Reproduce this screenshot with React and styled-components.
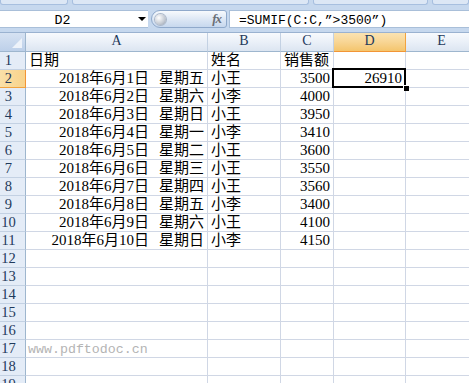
import React from 'react';
import styled, { createGlobalStyle, css } from 'styled-components';

const GlobalStyle = createGlobalStyle`
  html, body {
    margin: 0;
    padding: 0;
    background: #ffffff;
    overflow: hidden;
  }
`;

const columns = ['A', 'B', 'C', 'D', 'E'];

const records = [
  { date: '2018年6月1日', week: '星期五', name: '小王', sales: 3500 },
  { date: '2018年6月2日', week: '星期六', name: '小李', sales: 4000 },
  { date: '2018年6月3日', week: '星期日', name: '小王', sales: 3950 },
  { date: '2018年6月4日', week: '星期一', name: '小李', sales: 3410 },
  { date: '2018年6月5日', week: '星期二', name: '小王', sales: 3600 },
  { date: '2018年6月6日', week: '星期三', name: '小王', sales: 3550 },
  { date: '2018年6月7日', week: '星期四', name: '小王', sales: 3560 },
  { date: '2018年6月8日', week: '星期五', name: '小李', sales: 3400 },
  { date: '2018年6月9日', week: '星期六', name: '小王', sales: 4100 },
  { date: '2018年6月10日', week: '星期日', name: '小李', sales: 4150 },
];

const TOTAL_ROWS = 19;

const Window = styled.div`
  width: 469px;
  height: 383px;
  overflow: hidden;
  display: flex;
  flex-direction: column;
  background: #ffffff;
`;

// Bottom edge of the ribbon.
const RibbonEdge = styled.div`
  height: 9px;
  flex: none;
  display: flex;
  gap: 4px;
  background: #c6d8ee;
`;

const RibbonTab = styled.div`
  height: 4px;
  width: ${p => p.$w}px;
  flex: ${p => (p.$w ? 'none' : '1')};
  background: #dce7f5;
  border: 1px solid #a7bfdf;
  border-top: none;
  border-radius: 0 0 3px 3px;
`;

const FormulaBar = styled.div`
  height: 20px;
  flex: none;
  display: flex;
  align-items: stretch;
  background: #c6d8ee;
  padding: 1px 0;
  box-sizing: border-box;
`;

const NameBox = styled.div`
  width: 148px;
  flex: none;
  display: flex;
  background: #ffffff;
  border-top: 1px solid #a9bfd9;
  border-bottom: 1px solid #a9bfd9;
  box-sizing: border-box;
  font-family: "Liberation Mono", monospace;
  font-size: 13.3px;
  color: #000;
`;

const NameText = styled.div`
  width: 125px;
  display: flex;
  align-items: center;
  justify-content: center;
  padding-top: 2px;
`;

const DropArrow = styled.div`
  flex: 1;
  display: flex;
  align-items: center;
  justify-content: flex-end;
  padding-right: 2px;

  &::before {
    content: '';
    border-left: 4px solid transparent;
    border-right: 4px solid transparent;
    border-top: 4px solid #000;
  }
`;

const FxButton = styled.div`
  width: 76px;
  margin-left: 3px;
  flex: none;
  display: flex;
  align-items: center;
  justify-content: space-between;
  padding: 0 5px 0 3px;
  box-sizing: border-box;
  border: 1px solid #8fa9cb;
  border-radius: 9px 3px 3px 9px;
  background: linear-gradient(#f7fafd, #dbe6f4 55%, #c7d8ee);
`;

const Knob = styled.span`
  width: 11px;
  height: 11px;
  border-radius: 50%;
  background: radial-gradient(circle at 35% 35%, #ffffff, #c3c9d2 60%, #8e98a6);
  box-shadow: 0 0 0 1px #aab7c9;
`;

const FxLabel = styled.span`
  font-family: "Liberation Serif", serif;
  font-style: italic;
  font-weight: bold;
  font-size: 13px;
  color: #6a6f77;
  letter-spacing: -1px;
`;

const FormulaInput = styled.div`
  flex: 1;
  margin-left: 2px;
  display: flex;
  align-items: center;
  padding: 2px 0 0 9px;
  background: #ffffff;
  border: 1px solid #a9bfd9;
  border-right: none;
  font-family: "Liberation Mono", monospace;
  font-size: 13px;
  color: #000;
  white-space: pre;
`;

const Spacer = styled.div`
  height: 3px;
  flex: none;
  background: #c6d8ee;
  border-bottom: 1px solid #9ab2d0;
`;

const Sheet = styled.div`
  display: grid;
  grid-template-columns: 26px 182px 73px 53px 72px 72px;
  grid-template-rows: 19px;
  grid-auto-rows: 18px;
  font-family: "Liberation Serif", "Noto Sans CJK SC", serif;
  font-size: 15px;
  color: #000;
`;

const headerBase = css`
  box-sizing: border-box;
  display: flex;
  align-items: flex-end;
  justify-content: center;
  font-family: "Liberation Serif", serif;
  color: #1f3a5c;
  line-height: 1;
`;

const Corner = styled.div`
  position: relative;
  box-sizing: border-box;
  background: linear-gradient(#d6e2f2, #bdd0e9);
  border-right: 1px solid #9eb6ce;
  border-bottom: 1px solid #9eb6ce;

  &::after {
    content: '';
    position: absolute;
    right: 3px;
    bottom: 3px;
    width: 10px;
    height: 10px;
    background: #eef3fa;
    clip-path: polygon(100% 0, 100% 100%, 0 100%);
  }
`;

const ColHeader = styled.div`
  ${headerBase};
  padding-bottom: 3px;
  font-size: 14px;
  border-right: 1px solid ${p => (p.$active ? '#f2a33f' : '#c3d1e3')};
  border-bottom: 1px solid ${p => (p.$active ? '#f29536' : '#9eb6ce')};
  background: ${p =>
    p.$active
      ? 'linear-gradient(#fae3b2, #f8d594 50%, #f4c56d)'
      : 'linear-gradient(#f8fafd, #eaf0f8 50%, #dce5f1)'};
`;

const RowHeader = styled.div`
  ${headerBase};
  justify-content: center;
  padding: 0 8px 1px 0;
  font-size: 14.6px;
  border-right: 1px solid ${p => (p.$active ? '#f29536' : '#9eb6ce')};
  border-bottom: 1px solid ${p => (p.$active ? '#f2a33f' : '#c3d1e3')};
  background: ${p => (p.$active ? 'linear-gradient(90deg, #fae0a8, #f8d38b)' : '#e4ecf7')};
`;

const Cell = styled.div`
  position: relative;
  box-sizing: border-box;
  display: flex;
  align-items: flex-end;
  justify-content: ${p => (p.$right ? 'flex-end' : 'flex-start')};
  padding: 0 3px 1px 3px;
  border-right: 1px solid #d0d7e5;
  border-bottom: 1px solid #d0d7e5;
  line-height: 1;
  white-space: nowrap;
  overflow: ${p => (p.$overflow || p.$selected ? 'visible' : 'hidden')};
  z-index: ${p => (p.$selected ? 2 : p.$overflow ? 1 : 0)};

  ${p =>
    p.$selected &&
    css`
      &::before {
        content: '';
        position: absolute;
        left: -2px;
        top: -2px;
        right: -1px;
        bottom: -1px;
        border: 2px solid #000;
        pointer-events: none;
      }
      &::after {
        content: '';
        position: absolute;
        right: -4px;
        bottom: -4px;
        width: 5px;
        height: 5px;
        background: #000;
        border: 1px solid #fff;
        border-right: none;
        border-bottom: none;
      }
    `}
`;

const Weekday = styled.span`
  margin-left: 10px;
`;

const Watermark = styled.span`
  font-family: "Liberation Mono", monospace;
  font-size: 13.3px;
  color: #b4b4b4;
  margin-left: -1px;
`;

function rowCells(r) {
  if (r === 1) {
    return [
      <Cell key="a">日期</Cell>,
      <Cell key="b">姓名</Cell>,
      <Cell key="c">销售额</Cell>,
      <Cell key="d" />,
      <Cell key="e" />,
    ];
  }
  const rec = records[r - 2];
  if (rec) {
    return [
      <Cell key="a" $right>
        {rec.date}
        <Weekday>{rec.week}</Weekday>
      </Cell>,
      <Cell key="b">{rec.name}</Cell>,
      <Cell key="c" $right>{rec.sales}</Cell>,
      <Cell key="d" $right $selected={r === 2}>
        {r === 2 ? records.filter(x => x.sales > 3500).reduce((s, x) => s + x.sales, 0) : null}
      </Cell>,
      <Cell key="e" />,
    ];
  }
  if (r === 17) {
    return [
      <Cell key="a" $overflow>
        <Watermark>www.pdftodoc.cn</Watermark>
      </Cell>,
      <Cell key="b" />,
      <Cell key="c" />,
      <Cell key="d" />,
      <Cell key="e" />,
    ];
  }
  return columns.map(c => <Cell key={c} />);
}

const App = () => {
  const rows = Array.from({ length: TOTAL_ROWS }, (_, i) => i + 1);
  return (
    <Window>
      <GlobalStyle />
      <RibbonEdge>
        <RibbonTab $w={66} />
        <RibbonTab $w={235} />
        <RibbonTab $w={113} />
        <RibbonTab />
      </RibbonEdge>
      <FormulaBar>
        <NameBox>
          <NameText>D2</NameText>
          <DropArrow />
        </NameBox>
        <FxButton>
          <Knob />
          <FxLabel>fx</FxLabel>
        </FxButton>
        <FormulaInput>=SUMIF(C:C,”&gt;3500”)</FormulaInput>
      </FormulaBar>
      <Spacer />
      <Sheet>
        <Corner />
        {columns.map(c => (
          <ColHeader key={c} $active={c === 'D'}>{c}</ColHeader>
        ))}
        {rows.map(r => (
          <React.Fragment key={r}>
            <RowHeader $active={r === 2}>{r}</RowHeader>
            {rowCells(r)}
          </React.Fragment>
        ))}
      </Sheet>
    </Window>
  );
};

export default App;
